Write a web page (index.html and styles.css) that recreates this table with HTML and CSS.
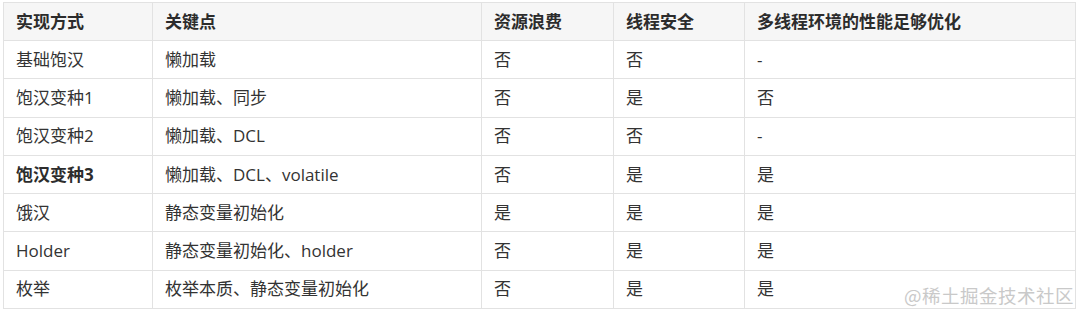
FILE: index.html
```html
<!DOCTYPE html>
<html lang="zh">
<head>
<meta charset="utf-8">
<link rel="stylesheet" href="styles.css">
</head>
<body>
<div class="wrap">
<table class="cmp">
  <colgroup>
    <col class="c1"><col class="c2"><col class="c3"><col class="c4"><col class="c5">
  </colgroup>
  <thead>
    <tr><th>实现方式</th><th>关键点</th><th>资源浪费</th><th>线程安全</th><th>多线程环境的性能足够优化</th></tr>
  </thead>
  <tbody>
    <tr><td>基础饱汉</td><td>懒加载</td><td>否</td><td>否</td><td>-</td></tr>
    <tr><td>饱汉变种1</td><td>懒加载、同步</td><td>否</td><td>是</td><td>否</td></tr>
    <tr><td>饱汉变种2</td><td>懒加载、DCL</td><td>否</td><td>否</td><td>-</td></tr>
    <tr><td><strong>饱汉变种3</strong></td><td>懒加载、DCL、volatile</td><td>否</td><td>是</td><td>是</td></tr>
    <tr><td>饿汉</td><td>静态变量初始化</td><td>是</td><td>是</td><td>是</td></tr>
    <tr><td>Holder</td><td>静态变量初始化、holder</td><td>否</td><td>是</td><td>是</td></tr>
    <tr><td>枚举</td><td>枚举本质、静态变量初始化</td><td>否</td><td>是</td><td>是</td></tr>
  </tbody>
</table>
<div class="watermark">@稀土掘金技术社区</div>
</div>
</body>
</html>
```
FILE: styles.css
```css
html, body {
  margin: 0;
  padding: 0;
  background: #ffffff;
}
.wrap {
  position: relative;
  width: 1080px;
  height: 312px;
  padding: 2px 0 0 3px;
  box-sizing: border-box;
}
.cmp {
  border-collapse: collapse;
  width: 1072px;
  table-layout: fixed;
  font-family: "Open Sans", "Noto Sans CJK SC", sans-serif;
  font-size: 17px;
  color: #333333;
}
.c1 { width: 149px; }
.c2 { width: 329px; }
.c3 { width: 132px; }
.c4 { width: 131px; }
.c5 { width: 331px; }
.cmp th, .cmp td {
  border: 1px solid #e2e2e2;
  padding: 0 12px;
  text-align: left;
  white-space: nowrap;
  line-height: 22px;
}
.cmp th {
  height: 37px;
  background: #f6f6f6;
  font-weight: 700;
  color: #2c2c2c;
}
.cmp td {
  height: 37.3px;
  font-weight: 400;
}
.cmp strong {
  font-weight: 700;
  color: #2c2c2c;
}
.watermark {
  position: absolute;
  right: 6px;
  bottom: 4px;
  font-family: "Noto Sans CJK SC", sans-serif;
  font-size: 18.5px;
  color: #c9c9c9;
  letter-spacing: 0.5px;
}
```
